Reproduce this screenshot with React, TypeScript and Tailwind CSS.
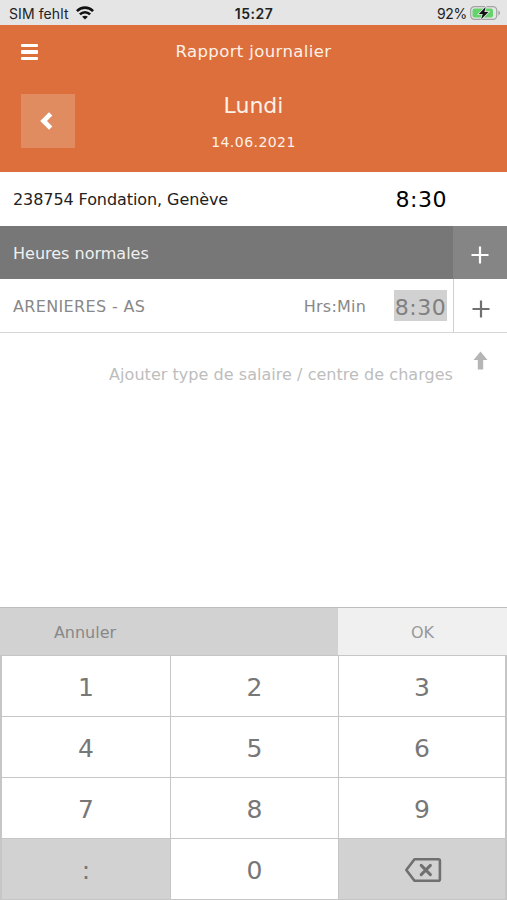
import React from "react";

const KEYS = ["1", "2", "3", "4", "5", "6", "7", "8", "9"];

const WifiIcon = () => (
  <svg viewBox="0 0 18 14" className="w-[18px] h-[14px]" fill="none" stroke="#111" strokeWidth="2.6">
    <path d="M0.9 5.1C5.4 0.5 12.6 0.5 17.1 5.1" />
    <path d="M3.9 8.4C6.8 5.5 11.2 5.5 14.1 8.4" />
    <path d="M9 13.6L6.1 10.8C7.8 9.3 10.2 9.3 11.9 10.8Z" fill="#111" stroke="none" />
  </svg>
);

const BatteryIcon = () => (
  <svg viewBox="0 0 31 14" className="w-[31px] h-[14px]">
    <rect x="0.7" y="0.7" width="26" height="12.6" rx="3.6" fill="none" stroke="#a3a3a3" strokeWidth="1.2" />
    <rect x="2.5" y="2.5" width="20.5" height="9" rx="2" fill="#65d36b" />
    <path d="M28.3 4.6C30.6 5.4 30.6 8.6 28.3 9.4Z" fill="#a3a3a3" />
    <path
      d="M15.6 1L8.9 7.9H12.7L11.1 13.2L18.4 6H14.4Z"
      fill="#111"
      stroke="#e5e5e5"
      strokeWidth="1.6"
      paintOrder="stroke"
    />
  </svg>
);

const PlusIcon = () => (
  <svg viewBox="0 0 18 18" className="w-[18px] h-[18px]" stroke="currentColor" strokeWidth="2.2">
    <path d="M9 0.5V17.5M0.5 9H17.5" />
  </svg>
);

const BackspaceIcon = () => (
  <svg
    viewBox="0 0 38 26"
    className="w-[38px] h-[26px]"
    fill="none"
    stroke="#707070"
    strokeWidth="2.6"
    strokeLinejoin="round"
    strokeLinecap="round"
  >
    <path d="M2.3 13L10.5 2.2H34.4Q35.9 2.2 35.9 3.7V22.3Q35.9 23.8 34.4 23.8H10.5Z" />
    <path d="M17.2 8.4L26.4 17.6M26.4 8.4L17.2 17.6" strokeWidth="3" />
  </svg>
);

const StatusBar = () => (
  <div className="grid grid-cols-3 items-center h-[25px] bg-[#e5e5e5] pl-[9px] pr-[6px] font-['Inter','Roboto',sans-serif] text-[14px] text-[#222]">
    <div className="flex items-center gap-[7px]">
      <span className="tracking-[0.1px] pt-[2px]">SIM fehlt</span>
      <WifiIcon />
    </div>
    <div className="text-center font-semibold pt-[2px] pr-[2px] tracking-[0.5px]">15:27</div>
    <div className="flex items-center justify-end gap-[3px]">
      <span className="pt-[2px] tracking-[-0.3px]">92%</span>
      <BatteryIcon />
    </div>
  </div>
);

const Header = () => (
  <header className="h-[147px] bg-[#dc6f3c] text-[#fff1e8]">
    <div className="grid grid-cols-[54px_1fr_54px] items-center h-[53px] px-[20px]">
      <button type="button" aria-label="Menu" className="flex flex-col gap-[3px] w-[17px] ml-[0.5px] pt-px">
        <span className="h-[3.5px] w-full rounded-[1px] bg-white" />
        <span className="h-[3.5px] w-full rounded-[1px] bg-white" />
        <span className="h-[3.5px] w-full rounded-[1px] bg-white" />
      </button>
      <h1 className="pt-[2px] text-center text-[16.5px] tracking-[0.38px]">Rapport journalier</h1>
    </div>
    <div className="grid grid-cols-[54px_1fr_54px] px-[20.5px] pt-[16px]">
      <button type="button" aria-label="Back" className="flex items-center justify-center size-[54px] pr-[3px] bg-[#e18b61]">
        <svg viewBox="0 0 14 18" className="w-[14px] h-[18px]" fill="none" stroke="#fff" strokeWidth="4.8">
          <path d="M11.7 1.9L4.6 9L11.7 16.1" />
        </svg>
      </button>
      <div className="text-center">
        <div className="text-[22px] leading-[24px]">Lundi</div>
        <div className="mt-[15px] text-[14px] leading-[18px] tracking-[0.45px]">14.06.2021</div>
      </div>
    </div>
  </header>
);

const App = () => {
  return (
    <div className="flex flex-col w-[507px] h-[900px] bg-white overflow-hidden font-['DejaVu_Sans',Verdana,sans-serif]">
      <StatusBar />
      <Header />

      <main className="flex-1">
        <div className="flex items-center justify-between h-[54px] pl-[13px] pr-[60px] text-[#222]">
          <span className="pt-[2px] text-[16px] tracking-[-0.08px]">238754 Fondation, Genève</span>
          <span className="text-[22px] tracking-[0.5px] text-black">8:30</span>
        </div>
        <div className="flex h-[53px] bg-[#777] text-[#f0f0f0]">
          <div className="flex flex-1 items-center pl-[13px] pt-[2px] text-[16px]">Heures normales</div>
          <button type="button" aria-label="Add hours" className="flex items-center justify-center w-[54px] pt-[4px] bg-[#858585] text-white">
            <PlusIcon />
          </button>
        </div>
        <div className="flex h-[54px] border-b border-[#d6d6d6] text-[#888]">
          <div className="flex flex-1 items-center pl-[13px] pr-[6px]">
            <span className="flex-1 pt-[3px] text-[16px] tracking-[0.35px]">ARENIERES - AS</span>
            <span className="mr-[28px] pt-[3px] text-[16px] tracking-[0.2px]">Hrs:Min</span>
            <span className="flex items-center justify-center w-[53px] h-[31px] pt-[3px] bg-[#d1d1d1] text-[22px] tracking-[0.5px] text-[#808080]">8:30</span>
          </div>
          <button type="button" aria-label="Add cost center" className="flex items-center justify-center w-[54px] pt-[6px] border-l border-[#d0d0d0] text-[#707070]">
            <PlusIcon />
          </button>
        </div>
        <div className="flex justify-end pt-[18px] pr-[19px] text-[#bdbdbd]">
          <p className="mr-[20px] pt-[14px] text-[16px] leading-[20px] tracking-[0.04px]">Ajouter type de salaire / centre de charges</p>
          <svg viewBox="0 0 15 19" className="w-[15px] h-[19px]" fill="#b5b5b5">
            <path d="M7.5 0.5L14.5 9H10.2V18.5H4.8V9H0.5Z" />
          </svg>
        </div>
      </main>

      <div className="border-t border-[#bdbdbd] text-[#777]">
        <div className="flex h-[47px] text-[16px]">
          <button type="button" className="w-[338px] pr-[168px] pt-[2px] bg-[#d2d2d2] text-[#888]">Annuler</button>
          <button type="button" className="flex-1 pt-[2px] bg-[#f0f0f0] text-[#999]">OK</button>
        </div>
        <div className="grid grid-cols-[168px_167px_166px] auto-rows-[60px] gap-px bg-[#c6c6c6] pt-px pb-px pl-[2px] pr-[2px] text-[25px]">
          {KEYS.map((key) => (
            <button key={key} type="button" className="bg-white pt-[3px]">
              {key}
            </button>
          ))}
          <button type="button" className="bg-[#d2d2d2] pt-[3px]">:</button>
          <button type="button" className="bg-white pt-[3px]">0</button>
          <button type="button" aria-label="Delete" className="flex items-center justify-center pl-px pt-px bg-[#d2d2d2]">
            <BackspaceIcon />
          </button>
        </div>
      </div>
    </div>
  );
};

export default App;
